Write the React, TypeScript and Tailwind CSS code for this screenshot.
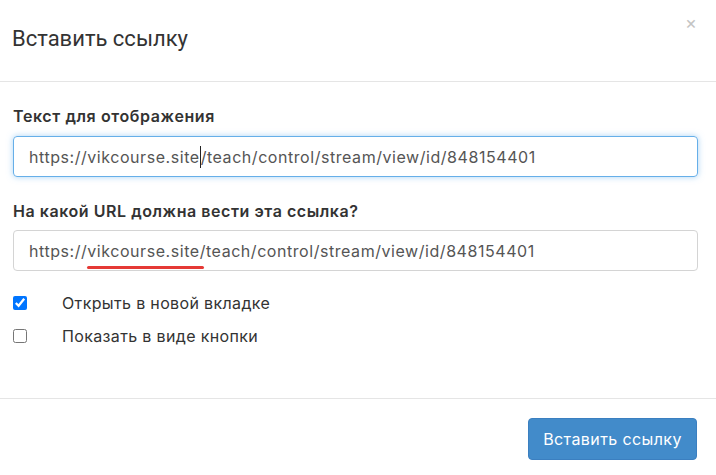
export default function App() {
  const url = "https://vikcourse.site/teach/control/stream/view/id/848154401";
  return (
    <div className="w-[716px] h-[475px] bg-white font-['Inter',sans-serif] text-[#333] overflow-hidden">
      <header className="h-[82px] border-b border-[#e5e5e5] flex items-start justify-between pl-[12px] pr-[19px]">
        <h1 className="mt-[24px] text-[22px] leading-[30px] font-['Roboto',sans-serif] font-normal text-[#333]">
          Вставить ссылку
        </h1>
        <span className="mt-[13px] text-[18px] leading-[20px] text-[#c4c4c4] font-['Liberation Sans',sans-serif]">
          ×
        </span>
      </header>

      <main className="h-[317px] border-b border-[#e5e5e5] px-[13px] pt-[24px]">
        <label className="block text-[16px] leading-[20px] font-semibold tracking-[0.6px] text-[#333] mb-[10px]">
          Текст для отображения
        </label>
        <div className="h-[41px] w-[685px] rounded-[4px] border border-[#66afe9] shadow-[0_0_6px_rgba(102,175,233,0.55)] flex items-center px-[15px] text-[16px] tracking-[0.55px] text-[#555]">
          <span>https://vikcourse.site</span>
          <span className="w-px h-[22px] bg-[#222]" />
          <span>/teach/control/stream/view/id/848154401</span>
        </div>

        <label className="block mt-[24px] text-[16px] leading-[20px] font-semibold tracking-[0.55px] text-[#333] mb-[9px]">
          На какой URL должна вести эта ссылка?
        </label>
        <div className="h-[41px] w-[685px] rounded-[4px] border border-[#d4d4d4] flex items-center px-[15px] text-[16px] tracking-[0.55px] text-[#555]">
          <span>https://</span>
          <span className="relative">
            vikcourse.site/
            <span className="absolute left-0 right-[2px] -bottom-[6px] h-[3px] rounded-full bg-[#e53935]" />
          </span>
          <span>{url.slice(23)}</span>
        </div>

        <div className="mt-[22px] flex items-center h-[20px] text-[16px] tracking-[0.35px] text-[#333]">
          <input type="checkbox" defaultChecked className="m-0 w-[14px] h-[14px] mr-[35px]" />
          <span>Открыть в новой вкладке</span>
        </div>
        <div className="mt-[13px] flex items-center h-[20px] text-[16px] tracking-[0.35px] text-[#333]">
          <input type="checkbox" className="m-0 w-[14px] h-[14px] mr-[35px]" />
          <span>Показать в виде кнопки</span>
        </div>
      </main>

      <footer className="flex justify-end pr-[19px] pt-[19px]">
        <button className="h-[42px] w-[169px] rounded-[4px] bg-[#428bca] border border-[#3b7fc0] text-white text-[16px] tracking-[0.4px]">
          Вставить ссылку
        </button>
      </footer>
    </div>
  );
}
